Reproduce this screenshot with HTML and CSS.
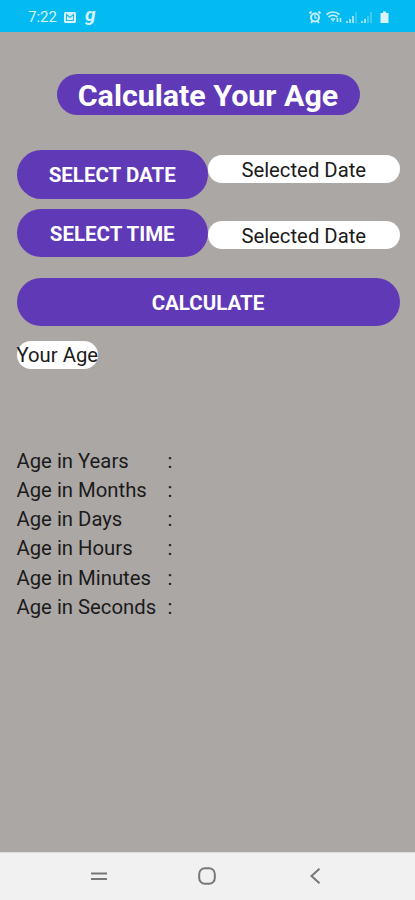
FILE: index.html
```html
<!DOCTYPE html>
<html lang="en">
<head>
<meta charset="utf-8">
<title>Calculate Your Age</title>
<link rel="stylesheet" href="styles.css">
</head>
<body>
<header class="status">
  <span class="clock">7:22</span>
  <svg class="mail" width="12" height="11" viewBox="0 0 12 11"><rect width="12" height="11" rx="1.5" fill="#d5f3fd"/><path d="M2.500 8.500v-6L6 5.500l3.500-3v6z" fill="none" stroke="#27b9ea" stroke-width="1.100"/></svg>
  <span class="g">g</span>
  <svg class="signals" width="84" height="16" viewBox="0 0 84 16" fill="none" stroke="#c9effc">
    <circle cx="7" cy="8.500" r="4" stroke-width="2"/><path d="M7 6v3h2" stroke-width="1.200"/><path d="M1.500 4.500l2-2M12.500 4.500l-2-2M3 14l1.500-2M11 14l-1.500-2" stroke-width="1.800"/>
    <path d="M18.500 5.500q6.500-5 13 0M20.500 8q4.500-3.500 9 0M23 10.500q2-1.500 4 0" stroke-width="1.700"/><path d="M25 12.500v-1.500M29.500 13V9M32.500 9v4" stroke-width="1.500"/>
    <path d="M39 14v-2M42 14v-4M45 14V7" stroke-width="1.500"/><path d="M48 14V3" stroke-width="1.500" opacity=".35"/>
    <path d="M54 14v-2M57 14v-4" stroke-width="1.500"/><path d="M60 14V7M63 14V3" stroke-width="1.500" opacity=".4"/>
    <path d="M72.500 4h2.500V2.500h3V4h2.500v10h-8z" fill="#d8f4fd" stroke="none"/>
  </svg>
</header>
<main class="screen">
  <h1 class="title">Calculate Your Age</h1>
  <div class="row date"><button class="btn">SELECT DATE</button><div class="value">Selected Date</div></div>
  <div class="row time"><button class="btn">SELECT TIME</button><div class="value">Selected Date</div></div>
  <button class="btn wide">CALCULATE</button>
  <div class="age">Your Age</div>
  <dl class="list">
    <dt>Age in Years</dt><dd>:</dd>
    <dt>Age in Months</dt><dd>:</dd>
    <dt>Age in Days</dt><dd>:</dd>
    <dt>Age in Hours</dt><dd>:</dd>
    <dt>Age in Minutes</dt><dd>:</dd>
    <dt>Age in Seconds</dt><dd>:</dd>
  </dl>
</main>
<nav class="nav">
  <svg width="18" height="18" viewBox="0 0 18 18"><path d="M1 6.500h16M1 12h16"/></svg>
  <svg width="18" height="18" viewBox="0 0 18 18"><rect x="1.200" y="1.200" width="15.600" height="15.600" rx="5.800"/></svg>
  <svg width="18" height="18" viewBox="0 0 18 18"><path d="M13.500 1.800L5.500 9l8 7.200"/></svg>
</nav>
</body>
</html>
```
FILE: styles.css
```css
* { box-sizing: border-box; }
body {
  margin: 0;
  height: 900px;
  display: flex;
  flex-direction: column;
  overflow: hidden;
  background: #aba7a5;
  color: #1b1b1b;
  font: 20.3px/28px Roboto, sans-serif;
}
.status {
  height: 32px;
  display: flex;
  align-items: center;
  padding: 2px 23px 0 28px;
  background: #03bbf0;
  color: #d5f3fd;
}
.clock { width: 36px; font-size: 15px; line-height: 18px; }
.g { margin-left: 9px; font: italic bold 19px/18px Roboto, sans-serif; transform: translateY(-2px); }
.signals { margin-left: auto; }
.screen {
  flex: 1;
  padding: 42px 15.5px 0 16.5px;
  display: flex;
  flex-direction: column;
}
.title {
  align-self: center;
  width: 303px;
  height: 41px;
  margin: 0;
  border-radius: 21px;
  background: #6039b7;
  color: #fff;
  font-size: 30.4px;
  font-weight: 700;
  line-height: 44px;
  text-align: center;
  white-space: nowrap;
}
.row { display: grid; grid-template-columns: 1fr 1fr; }
.date { margin-top: 35px; }
.time { margin-top: 10px; }
.btn {
  height: 48.5px;
  padding: 2px 0 0;
  border: 0;
  border-radius: 24.5px;
  background: #6039b7;
  color: #fff;
  font: 700 20.5px/24px Roboto, sans-serif;
}
.value {
  height: 28px;
  margin-top: 5px;
  border-radius: 14px;
  background: #fff;
  text-align: center;
  line-height: 30px;
}
.time .value { margin-top: 12px; }
.wide { margin-top: 20.5px; }
.age {
  align-self: flex-start;
  height: 28px;
  margin-top: 14.5px;
  border-radius: 14px;
  background: #fff;
  line-height: 29px;
}
.list {
  display: grid;
  grid-template-columns: 151px auto;
  grid-auto-rows: 29.25px;
  margin: 78px 0 0;
  line-height: 29.25px;
}
.list dd { margin: 0; }
.nav {
  height: 48px;
  display: flex;
  align-items: center;
  justify-content: space-between;
  padding: 0 91px 2px 90px;
  border-top: 1px solid #dedddd;
  background: #f1f1f1;
}
.nav svg { fill: none; stroke: #777; stroke-width: 2; }
```
